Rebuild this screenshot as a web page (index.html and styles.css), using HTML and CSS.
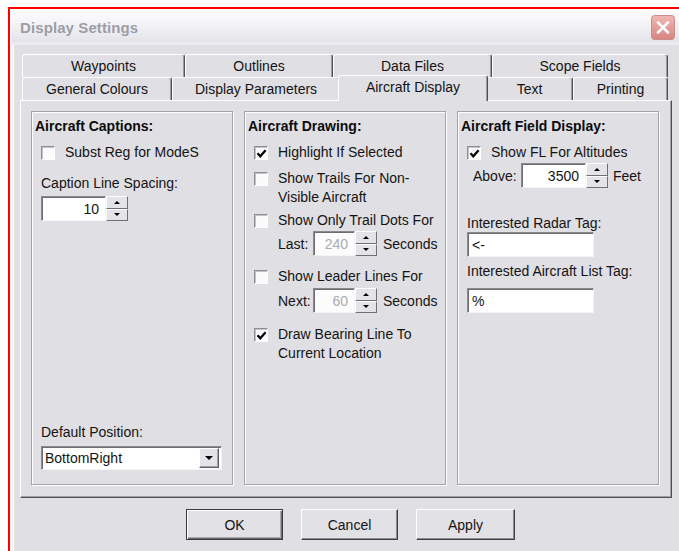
FILE: index.html
```html
<!DOCTYPE html>
<html lang="en">
<head>
<meta charset="utf-8">
<title>Display Settings</title>
<link rel="stylesheet" href="styles.css">
</head>
<body>
<div class="frame">
  <div class="window">
    <div class="titlebar">
      <span class="title">Display Settings</span>
      <span class="close" aria-label="Close">
        <svg width="24" height="25" viewBox="0 0 24 25">
          <defs>
            <linearGradient id="closeFill" x1="0" y1="0" x2="0" y2="1">
              <stop offset="0" stop-color="#f0b8b4"/>
              <stop offset="1" stop-color="#d9837f"/>
            </linearGradient>
          </defs>
          <rect x="0.5" y="0.5" width="23" height="24" rx="3" fill="url(#closeFill)" stroke="#c98e8c"/>
          <path d="M7 7.5 L17 17.5 M17 7.5 L7 17.5" stroke="#fff" stroke-width="2.6" stroke-linecap="round"/>
        </svg>
      </span>
    </div>

    <div class="client">
      <div class="tabs">
        <div class="tabrow">
          <div class="tab w163">Waypoints</div>
          <div class="tab w148">Outlines</div>
          <div class="tab w159">Data Files</div>
          <div class="tab w176">Scope Fields</div>
        </div>
        <div class="tabrow">
          <div class="tab w150">General Colours</div>
          <div class="tab w168">Display Parameters</div>
          <div class="tab sel">Aircraft Display</div>
          <div class="tab w87">Text</div>
          <div class="tab w95">Printing</div>
        </div>
      </div>

      <div class="panel">
        <section class="group">
          <div class="gh">Aircraft Captions:</div>
          <div class="check mt8"><span class="cb"></span><span>Subst Reg for ModeS</span></div>
          <div class="label mt12">Caption Line Spacing:</div>
          <div class="spin mt3">
            <span class="box w65">10</span>
            <span class="btns"><span class="up"></span><span class="down"></span></span>
          </div>
          <div class="label push">Default Position:</div>
          <div class="select mt4">
            <span class="val">BottomRight</span>
            <span class="drop"><span class="down-arrow"></span></span>
          </div>
        </section>

        <section class="group">
          <div class="gh">Aircraft Drawing:</div>
          <div class="check mt8"><span class="cb"><svg width="11" height="11" viewBox="0 0 11 11"><path d="M1.5 5.2 L4.3 8.2 L9.6 2.2" fill="none" stroke="#000" stroke-width="2.3"/></svg></span><span>Highlight If Selected</span></div>
          <div class="check mt7"><span class="cb"></span><span>Show Trails For Non-<br>Visible Aircraft</span></div>
          <div class="check mt4"><span class="cb"></span><span>Show Only Trail Dots For</span></div>
          <div class="spinrow mt1">
            <span class="pre">Last:</span>
            <div class="spin">
              <span class="box w42 off">240</span>
              <span class="btns"><span class="up"></span><span class="down"></span></span>
            </div>
            <span class="post">Seconds</span>
          </div>
          <div class="check mt11"><span class="cb"></span><span>Show Leader Lines For</span></div>
          <div class="spinrow mt2">
            <span class="pre">Next:</span>
            <div class="spin">
              <span class="box w42 off">60</span>
              <span class="btns"><span class="up"></span><span class="down"></span></span>
            </div>
            <span class="post">Seconds</span>
          </div>
          <div class="check mt12"><span class="cb"><svg width="11" height="11" viewBox="0 0 11 11"><path d="M1.5 5.2 L4.3 8.2 L9.6 2.2" fill="none" stroke="#000" stroke-width="2.3"/></svg></span><span>Draw Bearing Line To<br>Current Location</span></div>
        </section>

        <section class="group">
          <div class="gh">Aircraft Field Display:</div>
          <div class="check mt8"><span class="cb"><svg width="11" height="11" viewBox="0 0 11 11"><path d="M1.5 5.2 L4.3 8.2 L9.6 2.2" fill="none" stroke="#000" stroke-width="2.3"/></svg></span><span>Show FL For Altitudes</span></div>
          <div class="spinrow above mt1">
            <span class="pre">Above:</span>
            <div class="spin">
              <span class="box w65">3500</span>
              <span class="btns"><span class="up"></span><span class="down"></span></span>
            </div>
            <span class="post">Feet</span>
          </div>
          <div class="label short mt27">Interested Radar Tag:</div>
          <div class="edit">&lt;-</div>
          <div class="label short mt6">Interested Aircraft List Tag:</div>
          <div class="edit mt8">%</div>
        </section>
      </div>

      <div class="actions">
        <button class="btn default">OK</button>
        <button class="btn">Cancel</button>
        <button class="btn wide">Apply</button>
      </div>
    </div>
  </div>
</div>
</body>
</html>
```

FILE: styles.css
```css
* {
  box-sizing: border-box;
}

body {
  margin: 0;
  background: #fff;
  font-family: "Liberation Sans", Arial, sans-serif;
  font-size: 14px;
  color: #141414;
  overflow: hidden;
}

/* outer red frame around the dialog */
.frame {
  margin: 7px 0 0 8px;
  height: 544px;
  border-top: 2px solid #f00;
  border-left: 2px solid #f00;
  overflow: hidden;
}

.window {
  height: 100%;
  background: #e0dfe3;
  display: flex;
  flex-direction: column;
}

/* inactive silver title bar */
.titlebar {
  height: 36px;
  flex: none;
  display: flex;
  align-items: center;
  padding-left: 9px;
  background: linear-gradient(#fdfdfe 0%, #f3f3f6 45%, #e4e4ea 88%, #eeeef2 100%);
  border-left: 1px solid #fff;
}

.title {
  font-weight: bold;
  font-size: 15px;
  color: #9d9da6;
  letter-spacing: 0.1px;
}

.close {
  margin-left: auto;
  margin-right: 4px;
  margin-top: 1px;
  display: flex;
}

.client {
  flex: 1;
  padding: 9px 0 0 7px;
  border-left: 3px solid #f3f3f6;
  box-shadow: inset 1px 0 #fff;
}

/* property sheet tabs, two rows */
.tabs {
  margin-left: 2px;
}

.tabrow {
  display: flex;
  height: 23px;
}

.tab {
  flex: none;
  display: flex;
  align-items: center;
  justify-content: center;
  background: #e0dfe3;
  border-top: 1px solid #fff;
  border-left: 1px solid #fff;
  border-right: 1px solid #505050;
  box-shadow: inset -1px 0 #9c9ca0;
  border-radius: 3px 3px 0 0;
  white-space: nowrap;
}

.w163 { width: 163px; }
.w148 { width: 148px; }
.w159 { width: 159px; }
.w176 { width: 176px; }
.w150 { width: 150px; }
.w168 { width: 168px; }
.w87 { width: 87px; }
.w95 { width: 95px; }

.tab.sel {
  width: 150px;
  height: 26px;
  margin: -2px -2px -1px -2px;
  padding-bottom: 3px;
  position: relative;
  z-index: 1;
}

.panel {
  width: 652px;
  height: 398px;
  border: 1px solid;
  border-color: #fff #505050 #505050 #fff;
  box-shadow: inset -1px -1px #a0a0a4;
  padding: 10px 12px 12px 10px;
  display: grid;
  grid-template-columns: 202px 202px 202px;
  column-gap: 11px;
}

/* etched group boxes */
.group {
  border: 1px solid #a4a4a8;
  box-shadow: inset 1px 1px #fff, 1px 1px #fff;
  padding: 5px 0 14px 9px;
  display: flex;
  flex-direction: column;
  align-items: flex-start;
}

.gh {
  font-weight: bold;
  line-height: 18px;
  margin-left: -6px;
  color: #0c0c0c;
}

.label {
  line-height: 19px;
}

.label.short {
  line-height: 17px;
}

.push {
  margin-top: auto;
}

.mt1 { margin-top: 1px; }
.mt2 { margin-top: 2px; }
.mt3 { margin-top: 3px; }
.mt4 { margin-top: 4px; }
.mt6 { margin-top: 6px; }
.mt7 { margin-top: 7px; }
.mt8 { margin-top: 8px; }
.mt11 { margin-top: 11px; }
.mt12 { margin-top: 12px; }
.mt27 { margin-top: 27px; }

.check {
  display: flex;
  align-items: flex-start;
  line-height: 19px;
}

.cb {
  flex: none;
  width: 14px;
  height: 14px;
  margin: 3px 10px 0 0;
  background: #fbfbfb;
  border: 1px solid;
  border-color: #8e8e92 #fff #fff #8e8e92;
  box-shadow: inset 1px 1px #c4c4c8;
  display: flex;
  align-items: center;
  justify-content: center;
}

/* sunken edit boxes */
.box,
.edit,
.select {
  background: #fff;
  border: 1px solid;
  border-color: #8a8a8e #f4f4f6 #f4f4f6 #8a8a8e;
  box-shadow: inset 1px 1px #6e6e72;
}

.spin {
  display: flex;
  height: 25px;
}

.box {
  display: flex;
  align-items: center;
  justify-content: flex-end;
  padding-right: 6px;
}

.w65 { width: 65px; }
.w42 { width: 42px; }

.box.off {
  color: #ababaf;
  background: #fcfcfc;
}

.btns {
  width: 22px;
  display: flex;
  flex-direction: column;
}

.btns > span {
  flex: 1;
  display: flex;
  align-items: center;
  justify-content: center;
  background: #e4e3e7;
  border: 1px solid;
  border-color: #fff #707074 #707074 #fff;
}

.up::before,
.down::before,
.down-arrow {
  content: "";
  width: 0;
  height: 0;
  border-left: 3px solid transparent;
  border-right: 3px solid transparent;
}

.up::before {
  border-bottom: 3px solid #000;
}

.down::before,
.down-arrow {
  border-top: 3px solid #000;
}

.down-arrow {
  border-left-width: 4px;
  border-right-width: 4px;
  border-top-width: 4px;
}

.spinrow {
  display: flex;
  align-items: center;
  padding-left: 24px;
}

.spinrow .pre {
  width: 35px;
}

.spinrow .post {
  margin-left: 6px;
}

.spinrow.above {
  padding-left: 6px;
}

.spinrow.above .pre {
  width: 48px;
}

.spinrow.above .post {
  margin-left: 5px;
}

.edit {
  width: 127px;
  height: 25px;
  padding-left: 4px;
  display: flex;
  align-items: center;
}

.select {
  width: 181px;
  height: 24px;
  display: flex;
  align-items: center;
  justify-content: space-between;
  padding: 2px 2px 2px 3px;
}

.drop {
  width: 20px;
  height: 20px;
  display: flex;
  align-items: center;
  justify-content: center;
  background: #e4e3e7;
  border: 1px solid;
  border-color: #fff #606064 #606064 #fff;
  box-shadow: inset -1px -1px #a4a4a8;
}

/* dialog buttons */
.actions {
  display: flex;
  gap: 18px;
  margin: 11px 0 0 166px;
}

.btn {
  width: 97px;
  height: 31px;
  font-family: inherit;
  font-size: 14px;
  color: #141414;
  background: #e2e1e5;
  border: 1px solid;
  border-color: #fff #404044 #404044 #fff;
  box-shadow: inset -1px -1px #8c8c90;
  padding: 0;
}

.btn.wide {
  width: 99px;
}

.btn.default {
  border: 1px solid #3a3a3e;
  box-shadow: inset 1px 1px #fff, inset -1px -1px #6c6c70, inset -2px -2px #a8a8ac;
}
```
